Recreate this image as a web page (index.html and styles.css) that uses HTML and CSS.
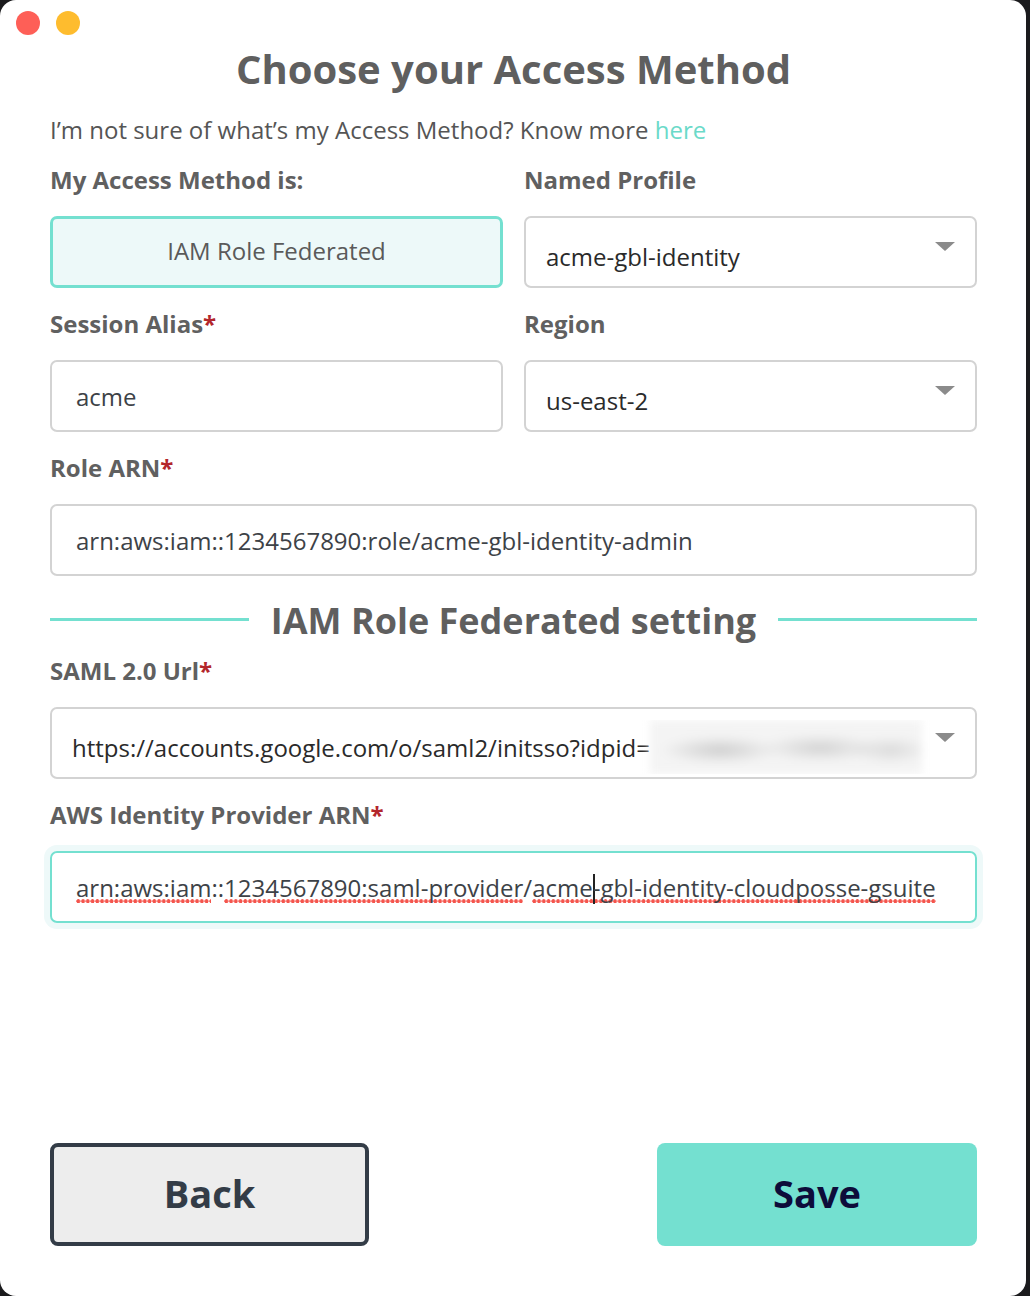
FILE: index.html
```html
<!DOCTYPE html>
<html lang="en">
<head>
<meta charset="utf-8">
<title>Choose your Access Method</title>
<link rel="stylesheet" href="styles.css">
</head>
<body>
<div class="window">
  <div class="traffic">
    <span class="light red"></span>
    <span class="light yellow"></span>
  </div>
  <h1 class="title">Choose your Access Method</h1>
  <p class="subtitle">I’m not sure of what’s my Access Method? Know more <span class="link">here</span></p>

  <div class="grid">
    <div class="field">
      <div class="label">My Access Method is:</div>
      <div class="method">IAM Role Federated</div>
    </div>
    <div class="field">
      <div class="label">Named Profile</div>
      <div class="select"><span class="select-text">acme-gbl-identity</span><span class="caret"></span></div>
    </div>
    <div class="field">
      <div class="label">Session Alias<span class="req">*</span></div>
      <div class="input">acme</div>
    </div>
    <div class="field">
      <div class="label">Region</div>
      <div class="select"><span class="select-text">us-east-2</span><span class="caret"></span></div>
    </div>
    <div class="field span2">
      <div class="label">Role ARN<span class="req">*</span></div>
      <div class="input">arn:aws:iam::1234567890:role/acme-gbl-identity-admin</div>
    </div>
  </div>

  <div class="divider">
    <span class="rule"></span>
    <span class="divider-text">IAM Role Federated setting</span>
    <span class="rule"></span>
  </div>

  <div class="grid">
    <div class="field span2">
      <div class="label">SAML 2.0 Url<span class="req">*</span></div>
      <div class="select saml"><span class="select-text">https://accounts.google.com/o/saml2/initsso?idpid=<span class="blur"></span></span><span class="caret"></span></div>
    </div>
    <div class="field span2">
      <div class="label">AWS Identity Provider ARN<span class="req">*</span></div>
      <div class="input focused"><span class="sp">arn:aws:iam</span>::<span class="sp">1234567890:saml-provider</span>/<span class="sp">acme<span class="cursor"></span>-gbl-identity-cloudposse-gsuite</span></div>
    </div>
  </div>

  <div class="footer">
    <div class="btn back">Back</div>
    <div class="btn save">Save</div>
  </div>
</div>
</body>
</html>
```
FILE: styles.css
```css
html, body {
  margin: 0;
  padding: 0;
  background: #1b1b1d;
}
body {
  width: 1030px;
  height: 1296px;
  overflow: hidden;
  font-family: "Open Sans", "Noto Sans", sans-serif;
}
.window {
  box-sizing: border-box;
  width: 1026px;
  height: 1296px;
  background: #ffffff;
  border-radius: 16px;
  padding: 0 49px 50px 50px;
  display: flex;
  flex-direction: column;
}
.traffic {
  display: flex;
  gap: 16px;
  margin: 11px 0 0 -34px;
  height: 24px;
}
.light {
  width: 24px;
  height: 24px;
  border-radius: 50%;
}
.red { background: #fe5f57; }
.yellow { background: #febc2e; }

.title {
  margin: 11px 0 0 0;
  text-align: center;
  font-size: 40px;
  line-height: 46px;
  font-weight: 700;
  color: #5f5f5f;
}
.subtitle {
  margin: 23px 0 0 0;
  font-size: 24px;
  line-height: 30px;
  color: #555555;
}
.link { color: #6bdac9; }

.grid {
  display: grid;
  grid-template-columns: 1fr 1fr;
  column-gap: 21px;
  row-gap: 21px;
}
.subtitle + .grid { margin-top: 20px; }
.span2 { grid-column: 1 / 3; }
.field {
  display: flex;
  flex-direction: column;
}
.label {
  font-size: 24px;
  line-height: 30px;
  font-weight: 700;
  color: #606060;
  margin-bottom: 21px;
}
.req { color: #b3262b; }

.method {
  box-sizing: border-box;
  height: 72px;
  padding-bottom: 4px;
  border: 3px solid #74e0d0;
  background: #edf9f9;
  border-radius: 7px;
  display: flex;
  align-items: center;
  justify-content: center;
  font-size: 24px;
  color: #5a5a5a;
}
.select, .input {
  box-sizing: border-box;
  height: 72px;
  border: 2px solid #d3d3d3;
  border-radius: 7px;
  display: flex;
  align-items: center;
  font-size: 24px;
  white-space: nowrap;
  overflow: hidden;
}
.select {
  padding: 8px 20px 0 20px;
  color: #2a2a2a;
}
.select-text {
  flex: 1;
  overflow: hidden;
  display: flex;
  align-items: center;
}
.saml .select-text { padding-right: 16px; }
.caret {
  width: 0;
  height: 0;
  border-left: 10px solid transparent;
  border-right: 10px solid transparent;
  border-top: 9px solid #8b8b8b;
  margin-top: -20px;
  flex: none;
}
.blur {
  display: inline-block;
  width: 272px;
  height: 54px;
  flex: none;
  background:
    radial-gradient(ellipse 60px 14px at 70px 30px, rgba(160,160,160,0.45), rgba(160,160,160,0) 100%),
    radial-gradient(ellipse 60px 14px at 170px 28px, rgba(160,160,160,0.4), rgba(160,160,160,0) 100%),
    radial-gradient(ellipse 40px 14px at 240px 30px, rgba(170,170,170,0.35), rgba(170,170,170,0) 100%),
    #f4f4f4;
  filter: blur(4px);
}
.input {
  padding: 0 24px;
  color: #3d4247;
}
.input.focused {
  border-color: #74e0d0;
  box-shadow: 0 0 0 6px #eef9f9;
  overflow: visible;
}
.sp {
  background-image: radial-gradient(circle at 2.3px 2.2px, #f4554d 1.7px, rgba(244,85,77,0) 2.3px);
  background-size: 4.75px 5px;
  background-repeat: repeat-x;
  background-position: 0 100%;
}
.cursor {
  display: inline-block;
  width: 0;
  height: 30px;
  border-left: 2px solid #222;
  vertical-align: -7px;
  margin-right: -2px;
}

.divider {
  display: flex;
  align-items: center;
  gap: 22px;
  height: 46px;
  margin: 22px 0 12px 0;
}
.rule {
  flex: 1;
  height: 3px;
  background: #74e0d0;
  margin-top: -4px;
}
.divider-text {
  font-size: 36px;
  line-height: 46px;
  font-weight: 700;
  color: #5f5f5f;
}

.footer {
  margin-top: auto;
  display: flex;
  justify-content: space-between;
}
.btn {
  box-sizing: border-box;
  width: 320px;
  height: 103px;
  padding-bottom: 3px;
  border-radius: 8px;
  display: flex;
  align-items: center;
  justify-content: center;
  font-size: 38px;
  font-weight: 700;
}
.back {
  width: 319px;
  border: 4px solid #333c47;
  background: #ededed;
  color: #333c47;
}
.save {
  background: #74e0d0;
  color: #0d0c3a;
}
```
